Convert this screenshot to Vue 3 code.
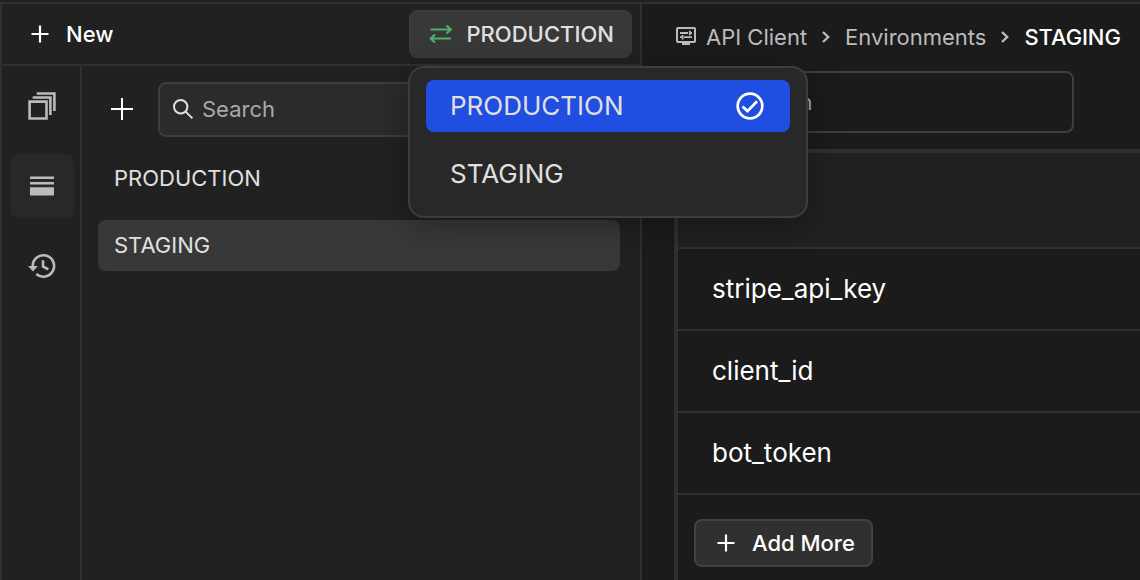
<script setup>
const environments = ['PRODUCTION', 'STAGING']
const selected = 'STAGING'
const active = 'PRODUCTION'
const variables = ['stripe_api_key', 'client_id', 'bot_token']
</script>

<template>
  <div class="app">
    <aside class="sidebar">
      <header class="topbar">
        <button class="new-btn">
          <svg class="plus" viewBox="0 0 18 18"><path d="M9 .5v17M.5 9h17" /></svg>
          <span>New</span>
        </button>
        <div class="switcher">
          <button class="env-btn">
            <svg class="swap" viewBox="0 0 24 20">
              <path d="M1.5 5.5H22M17.5 1.5l4.2 4-4.2 4M22 14.5H1.5M6 10.5l-4.2 4 4.2 4" />
            </svg>
            <span>{{ active }}</span>
          </button>
          <div class="menu">
            <div v-for="env in environments" :key="env" class="option" :class="{ active: env === active }">
              <span>{{ env }}</span>
              <svg v-if="env === active" class="check" viewBox="0 0 28 28">
                <circle cx="14" cy="14" r="12.3" />
                <path d="M6.5 14.4l5 4.7 9.6-9.8" />
              </svg>
            </div>
          </div>
        </div>
      </header>
      <div class="body">
        <nav class="rail">
          <div class="rail-item">
            <svg width="28" height="28" viewBox="0 0 28 28" class="line-icon">
              <path d="M1.6 9.6h16.9v16.9H1.6zM4.7 5.5h17.7v17.6M8.7 1.5h17.7v17.6" />
            </svg>
          </div>
          <div class="rail-item current">
            <svg width="24" height="20" viewBox="0 0 24 20" class="fill-icon">
              <path d="M0 .4h24v2.6H0zM0 6h24v2.6H0zM0 11.2h24v8.4H0z" />
            </svg>
          </div>
          <div class="rail-item">
            <svg width="28" height="26" viewBox="0 0 28 26" class="line-icon">
              <path d="M4.7 13a10.7 10.7 0 1 1 3.6 8" />
              <path d="M15 7.2v6.2l5.3 3" />
              <path class="solid" d="M0 13.1h9.8L5 18.4z" />
            </svg>
          </div>
        </nav>
        <section class="list-pane">
          <div class="tools">
            <svg class="add" viewBox="0 0 22 22"><path d="M11 0v22M0 11h22" /></svg>
            <div class="search">
              <svg class="lens" viewBox="0 0 20 20"><circle cx="7.7" cy="7.7" r="6.7" /><path d="M12.6 12.6l6.8 6.8" /></svg>
              <span>Search</span>
            </div>
          </div>
          <ul class="envs">
            <li v-for="env in environments" :key="env" :class="{ selected: env === selected }">
              <span>{{ env }}</span>
            </li>
          </ul>
        </section>
      </div>
    </aside>
    <main class="content">
      <div class="crumbs">
        <svg class="client" viewBox="0 0 20 18">
          <path class="frame" d="M2 1h16q1 0 1 1v12q0 1-1 1H2q-1 0-1-1V2q0-1 1-1z" />
          <path class="foot" d="M6 15h8v3H6z" />
          <path class="slider" d="M4 6h8M13.5 6H16M13.8 3.8v4.4M4 10.2h2.3M8 10.2h8M6.6 8v4.4" />
        </svg>
        <span class="crumb first">API Client</span>
        <svg class="chevron" viewBox="0 0 8 12"><path d="M1 1l5.2 5L1 11" /></svg>
        <span class="crumb second">Environments</span>
        <svg class="chevron" viewBox="0 0 8 12"><path d="M1 1l5.2 5L1 11" /></svg>
        <span class="crumb here">STAGING</span>
      </div>
      <div class="filter"><span>Search</span></div>
      <div class="table">
        <div class="row head"></div>
        <div v-for="name in variables" :key="name" class="row"><span>{{ name }}</span></div>
        <button class="more">
          <svg class="plus" viewBox="0 0 18 18"><path d="M9 .5v17M.5 9h17" /></svg>
          <span>Add More</span>
        </button>
      </div>
    </main>
  </div>
</template>

<style>
html, body { margin: 0; background: #212121; overflow: hidden; }
</style>

<style scoped>
.app, .app * { box-sizing: border-box; }
.app {
  display: flex;
  width: 1140px;
  height: 580px;
  padding-top: 2px;
  overflow: hidden;
  background: #212121;
  color: #e0e0e0;
  font: 400 22px/26px Inter, sans-serif;
}
svg { display: block; flex: none; fill: none; overflow: visible; }
span { white-space: nowrap; }
button { font: inherit; color: inherit; margin: 0; border: 0; background: none; display: flex; align-items: center; }
.sidebar {
  width: 642px;
  flex: none;
  display: flex;
  flex-direction: column;
  border: 2px solid #303030;
  border-bottom: 0;
}
.topbar {
  height: 62px;
  flex: none;
  display: flex;
  align-items: flex-start;
  justify-content: space-between;
  padding: 6px 8px 0 0;
  border-bottom: 2px solid #303030;
}
.new-btn { height: 48px; padding: 0 0 0 29px; gap: 17px; color: #fff; font-weight: 500; }
.plus { width: 18px; height: 18px; stroke: #fff; stroke-width: 2.2; }
.switcher { position: relative; width: 223px; }
.env-btn {
  width: 223px;
  height: 48px;
  padding: 0 0 0 19px;
  gap: 13.5px;
  border: 1px solid #3c3c3c;
  border-radius: 8px;
  background: #383838;
  font-weight: 500;
}
.swap { width: 24px; height: 20px; stroke: #4caf6a; stroke-width: 2.2; }
.menu {
  position: absolute;
  z-index: 2;
  left: -1px;
  top: 56px;
  width: 400px;
  height: 152px;
  padding: 12px 16px;
  border: 2px solid #3d3d3d;
  border-radius: 16px;
  background: #282828;
  box-shadow: 0 8px 32px rgba(0, 0, 0, .3);
  font-size: 26px;
  display: flex;
  flex-direction: column;
  gap: 16px;
}
.option {
  height: 52px;
  flex: none;
  display: flex;
  align-items: center;
  justify-content: space-between;
  padding: 0 26px 0 24px;
  border-radius: 8px;
}
.option.active { background: #1f4ee0; }
.check { width: 28px; height: 28px; stroke: #fff; stroke-width: 2.7; }
.body { flex: 1; display: flex; }
.rail {
  width: 80px;
  padding: 8px 6px 0 8px;
  border-right: 2px solid #303030;
  display: flex;
  flex-direction: column;
  gap: 16px;
}
.rail-item { width: 64px; height: 64px; display: flex; align-items: center; justify-content: center; border-radius: 8px; }
.current { background: #282828; }
.line-icon { stroke: #bbb; stroke-width: 2.6; }
.fill-icon { fill: #bbb; }
.solid { fill: #bbb; stroke: none; }
.list-pane { flex: 1; padding: 16px 20px 0 16px; }
.tools { display: flex; align-items: center; gap: 25px; padding-left: 13px; }
.add { width: 22px; height: 22px; margin-bottom: 2px; stroke: #fff; stroke-width: 2; }
.search {
  flex: 1;
  height: 55px;
  display: flex;
  align-items: center;
  gap: 9px;
  padding: 0 0 2px 13px;
  border: 2px solid #3d3d42;
  border-radius: 8px;
  background: #2b2b2b;
  color: #a8a8ad;
}
.lens { width: 20px; height: 20px; stroke: #e0e0e0; stroke-width: 2; }
.envs { list-style: none; margin: 16px 0 0; padding: 0; display: flex; flex-direction: column; gap: 16px; }
.envs li { height: 51px; padding: 0 0 2px 16px; display: flex; align-items: center; border-radius: 8px; }
.envs .selected { background: #383838; }
.content { flex: 1; min-width: 0; border-top: 2px solid #303030; background: #1b1b1b; padding-left: 32px; }
.crumbs { height: 67px; display: flex; align-items: center; padding: 0 0 1px 2px; color: #bbb; }
.client { width: 20px; height: 18px; margin: 0 10px 2px 0; }
.frame { stroke: #bbb; stroke-width: 2; }
.foot { fill: #bbb; }
.slider { stroke: #bbb; stroke-width: 1.8; }
.chevron { width: 8px; height: 12px; stroke: #bbb; stroke-width: 2.4; margin: 0 15px; }
.here { color: #fff; font-weight: 500; letter-spacing: -.1px; }
.filter {
  width: 400px;
  height: 62px;
  padding-left: 63.5px;
  display: flex;
  align-items: center;
  border: 2px solid #3d3d42;
  border-radius: 8px;
  color: #a8a8ad;
}
.table {
  margin-top: 16px;
  height: 440px;
  border: 4px solid #303030;
  border-width: 4px 0 0 4px;
  color: #fff;
  font-size: 26px;
}
.row { height: 82px; display: flex; align-items: center; padding-left: 34px; border-bottom: 2px solid #303030; }
.head { height: 96px; background: #212121; }
.more {
  margin: 24px 0 0 16px;
  width: 179px;
  height: 48px;
  padding: 0 0 0 21px;
  gap: 17px;
  border: 2px solid #424242;
  border-radius: 8px;
  background: #303030;
  font-size: 22px;
  font-weight: 500;
}
</style>
